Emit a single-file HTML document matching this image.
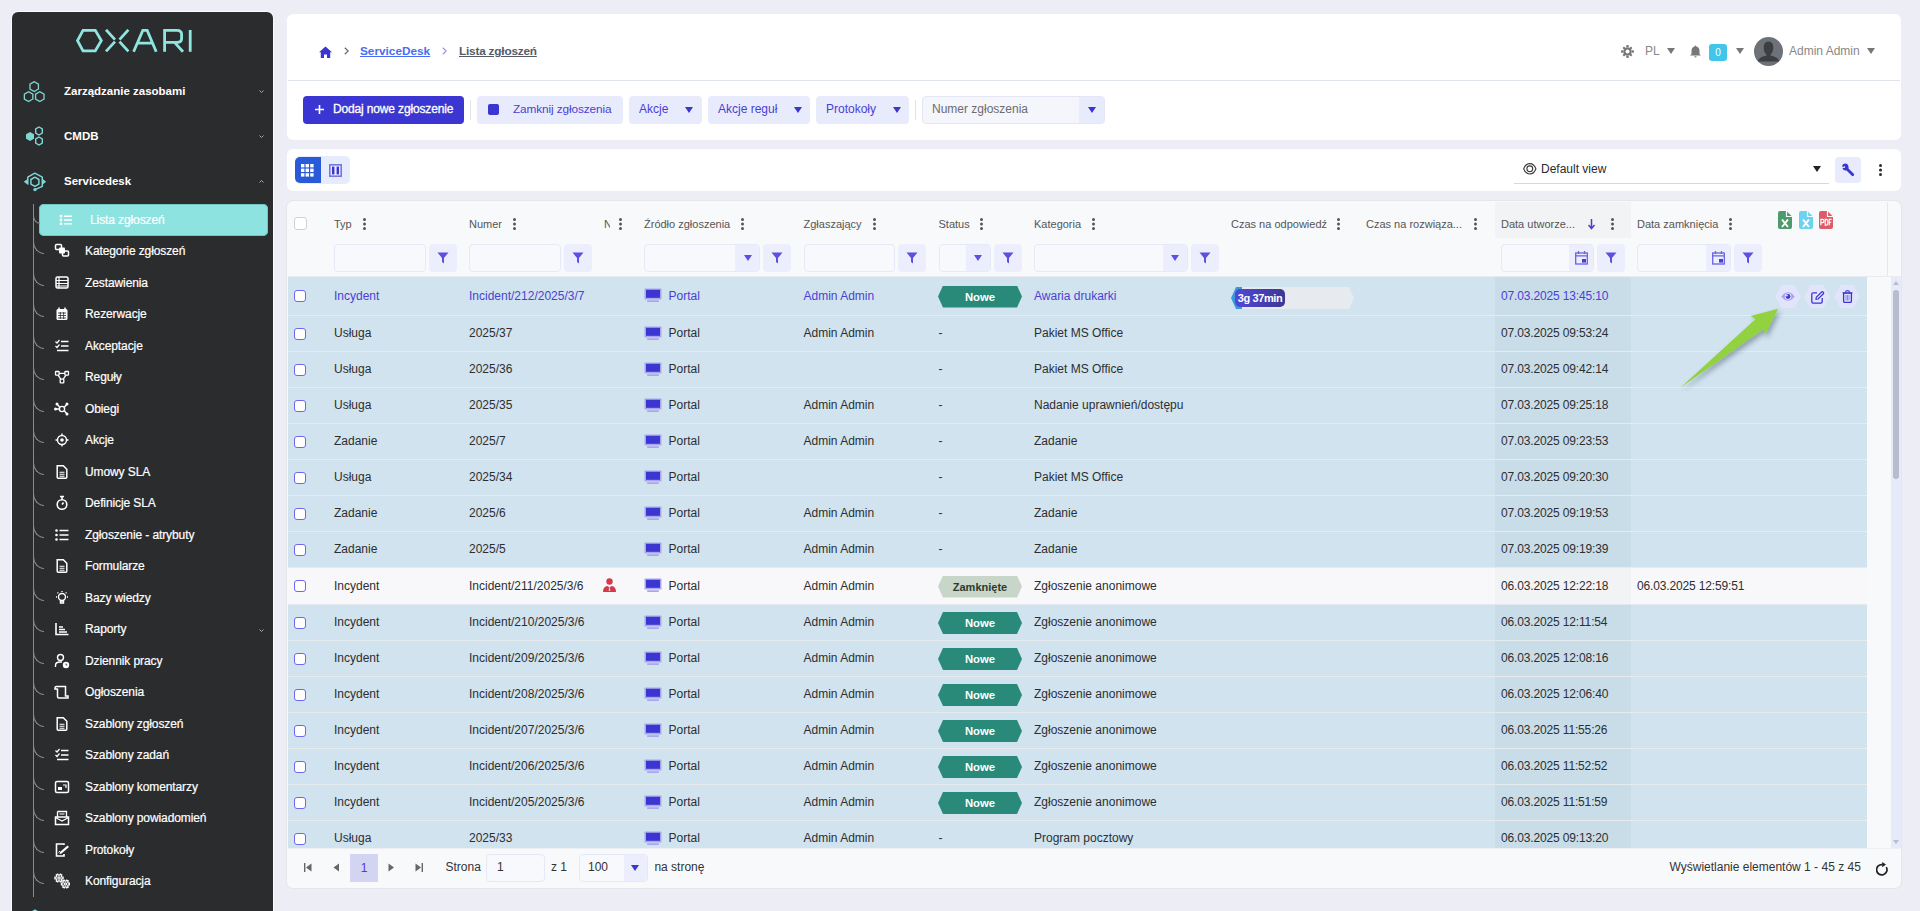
<!DOCTYPE html><html><head><meta charset="utf-8"><style>
*{box-sizing:border-box;margin:0;padding:0}
html,body{width:1920px;height:911px;overflow:hidden}
body{background:#ededf5;font-family:"Liberation Sans",sans-serif;position:relative;color:#2f2f33}
.abs{position:absolute}
svg{display:block}
#side{position:absolute;left:12px;top:12px;width:261px;height:920px;background:#2b2c2e;border-radius:6px;box-shadow:0 0 0 1px #fafafa}
.top{position:absolute;left:52px;color:#fff;font-weight:bold;font-size:11.5px;white-space:nowrap;line-height:14px}
.chev{position:absolute;left:246.5px;width:5px;height:3px}
.sub{position:absolute;left:73px;color:#fff;font-size:12px;white-space:nowrap;line-height:14px;letter-spacing:-0.1px;-webkit-text-stroke:0.2px #fff}
.sico{position:absolute;width:16px;height:16px}
#hdr{position:absolute;left:287px;top:14px;width:1614px;height:126px;background:#fff;border-radius:6px}
#tb2{position:absolute;left:287px;top:149px;width:1614px;height:42px;background:#fff;border-radius:6px}
#tbl{position:absolute;left:287px;top:201px;width:1614px;height:687px;background:#f8f9fb;border-radius:6px;box-shadow:0 0 0 1px #e4e6ec;overflow:hidden}
.t{position:absolute;white-space:nowrap;font-size:12px;line-height:14px}
.btn{position:absolute;top:82px;height:28px;background:#e8ebfc;border-radius:4px;color:#4338d0;font-size:12px;line-height:28px;white-space:nowrap}
.arr{position:absolute;width:0;height:0;border-left:4px solid transparent;border-right:4px solid transparent;border-top:6px solid #3b35d1}
.hd{position:absolute;top:18px;font-size:11px;color:#555;white-space:nowrap;line-height:14px}
.dots{position:absolute;top:17px;width:3px;height:12px}
.inp{position:absolute;top:43px;height:28px;border:1px solid #e6e8f7;border-radius:4px;background:#f8f9fc}
.fbtn{position:absolute;top:43px;width:28px;height:28px;background:#eceefd;border-radius:4px}
.row{position:absolute;left:1px;width:1579px;background:#d0e3ee;border-bottom:1px solid #eaeeee}
.cell{position:absolute;white-space:nowrap;font-size:12px;line-height:14px;color:#2e2e30}
.cb{position:absolute;left:7px;width:12px;height:12px;border:1.5px solid #6b63ea;border-radius:3px;background:#fff}
</style></head><body>
<div id="side">
<div class="abs" style="left:64px;top:17px"><svg width="118" height="24" viewBox="0 0 118 24" style=""><g fill="none" stroke="#8fe6e1" stroke-width="2.8" stroke-linejoin="miter">
<path d="M7,1.4 L19.3,1.4 L25.3,11.6 L19.3,21.8 L7,21.8 L1.5,11.6 Z"/>
<path d="M30,0.8 L39,10.6 M39,12.6 L30,22.4"/>
<path d="M52.4,0.8 L43.5,10.6 M43.5,12.6 L52.4,22.4"/>
<path d="M57.6,22.8 L66.8,1.4 L71.2,1.4 L80.2,22.8 M61.2,14.2 L76.5,14.2"/>
<path d="M88.6,22.8 L88.6,1.4 L101,1.4 Q105.6,1.4 105.6,5.5 L105.6,9.5 Q105.6,13.4 101,13.4 L88.6,13.4 M98.5,13.4 L107,22.8"/>
<path d="M114.2,1 L114.2,22.8"/>
</g></svg></div>
<div class="abs" style="left:11px;top:69px"><svg width="23" height="22" viewBox="0 0 23 22" style=""><g fill="none" stroke="#7fd6d2" stroke-width="1.3"><path d="M15.44,8.05 L11.20,10.50 L6.96,8.05 L6.96,3.15 L11.20,0.70 L15.44,3.15 Z"/><path d="M9.84,18.05 L5.60,20.50 L1.36,18.05 L1.36,13.15 L5.60,10.70 L9.84,13.15 Z"/><path d="M21.04,18.05 L16.80,20.50 L12.56,18.05 L12.56,13.15 L16.80,10.70 L21.04,13.15 Z"/></g></svg></div>
<div class="top" style="top:72px">Zarządzanie zasobami</div>
<div class="abs" style="left:13px;top:114px"><svg width="20" height="21" viewBox="0 0 20 21" style=""><g fill="none" stroke="#7fd6d2" stroke-width="1.4"><path d="M14,1 L17.3,3 L17.3,7 L14,9 L10.7,7 L10.7,3 Z"/><path d="M14,11 L17.3,13 L17.3,17 L14,19 L10.7,17 L10.7,13 Z"/></g><path d="M5,6 L9,8.3 L9,12.7 L5,15 L1,12.7 L1,8.3 Z" fill="#7fd6d2"/></svg></div>
<div class="top" style="top:117px">CMDB</div>
<div class="abs" style="left:10px;top:159px"><svg width="26" height="21" viewBox="0 0 26 21" style=""><g fill="none" stroke="#7fd6d2" stroke-width="1.5" stroke-linejoin="round"><path d="M5.8,13.6 L5.8,6.1 L12.8,2.2 L20.3,6.1 L20.3,15.4 L13,18.6"/><path d="M12.90,6.20 L16.88,8.50 L16.88,13.10 L12.90,15.40 L8.92,13.10 L8.92,8.50 Z"/></g><path d="M1.8,10.8 L5.8,7.8 L5.8,13.8 Z M24.2,10.8 L20.3,7.8 L20.3,13.8 Z" fill="#7fd6d2"/><circle cx="13" cy="18.6" r="1.7" fill="#7fd6d2"/></svg></div>
<div class="top" style="top:162px">Servicedesk</div>
<div class="chev" style="top:78px"><svg width="5" height="3" viewBox="0 0 5 3" style=""><path d="M0.5,0.5 L2.5,2.5 L4.5,0.5" fill="none" stroke="#aaa" stroke-width="1"/></svg></div>
<div class="chev" style="top:123px"><svg width="5" height="3" viewBox="0 0 5 3" style=""><path d="M0.5,0.5 L2.5,2.5 L4.5,0.5" fill="none" stroke="#aaa" stroke-width="1"/></svg></div>
<div class="chev" style="top:168px"><svg width="5" height="3" viewBox="0 0 5 3" style=""><path d="M0.5,2.5 L2.5,0.5 L4.5,2.5" fill="none" stroke="#aaa" stroke-width="1"/></svg></div>
<div class="abs" style="left:21px;top:192px;width:1px;height:693px;background:#8a8a8c"></div>
<div class="abs" style="left:27px;top:192px;width:229px;height:32px;background:#8ce3df;border-radius:5px;box-shadow:inset 0 0 0 1px #72c6c2"></div>
<div class="abs" style="left:21px;top:198px;width:7px;height:14px;border-left:1px solid #8a8a8c;border-bottom:1px solid #8a8a8c;border-bottom-left-radius:10px 12px"></div>
<div class="abs" style="left:47px;top:202px"><svg width="14" height="12" viewBox="0 0 14 12" style=""><g fill="#ffffff"><circle cx="2" cy="2.2" r="1.4"/><circle cx="2" cy="6" r="1.4"/><circle cx="2" cy="9.8" r="1.4"/></g><path d="M5,2.2 H13 M5,6 H13 M5,9.8 H13" stroke="#ffffff" stroke-width="1.6"/></svg></div>
<div class="sub" style="left:78px;top:201px;color:#fff">Lista zgłoszeń</div>
<div class="abs" style="left:21px;top:221.0px;width:11px;height:21px;border-left:1px solid #8a8a8c;border-bottom:1px solid #8a8a8c;border-bottom-left-radius:14px 16px"></div>
<div class="sico" style="left:42px;top:231.0px"><svg width="16" height="16" viewBox="0 0 16 16" style=""><rect x="1.5" y="1.5" width="6" height="5" rx="1" fill="none" stroke="#ffffff" stroke-width="1.5"/><rect x="5" y="4.5" width="6" height="6" rx="1" fill="#ffffff"/><rect x="8.5" y="8" width="6" height="5" rx="1" fill="none" stroke="#ffffff" stroke-width="1.5"/></svg></div>
<div class="sub" style="top:232.0px">Kategorie zgłoszeń</div>
<div class="abs" style="left:21px;top:252.5px;width:11px;height:21px;border-left:1px solid #8a8a8c;border-bottom:1px solid #8a8a8c;border-bottom-left-radius:14px 16px"></div>
<div class="sico" style="left:42px;top:262.5px"><svg width="16" height="16" viewBox="0 0 16 16" style=""><rect x="2" y="2" width="12" height="11" rx="1.5" fill="none" stroke="#ffffff" stroke-width="1.5"/><path d="M2,5.5 H14 M2,8.5 H14 M2,11 H14 M5,2 V13" stroke="#ffffff" stroke-width="1.2"/></svg></div>
<div class="sub" style="top:263.5px">Zestawienia</div>
<div class="abs" style="left:21px;top:284.0px;width:11px;height:21px;border-left:1px solid #8a8a8c;border-bottom:1px solid #8a8a8c;border-bottom-left-radius:14px 16px"></div>
<div class="sico" style="left:42px;top:294.0px"><svg width="16" height="16" viewBox="0 0 16 16" style=""><rect x="2.5" y="3" width="11" height="11" rx="1.5" fill="#ffffff"/><path d="M5,1.5 V4 M11,1.5 V4" stroke="#ffffff" stroke-width="1.5"/><path d="M4,7 H12 M4,9.5 H12 M4,12 H12 M6.3,6 V13 M9.6,6 V13" stroke="#2b2c2e" stroke-width="0.8"/></svg></div>
<div class="sub" style="top:295.0px">Rezerwacje</div>
<div class="abs" style="left:21px;top:315.5px;width:11px;height:21px;border-left:1px solid #8a8a8c;border-bottom:1px solid #8a8a8c;border-bottom-left-radius:14px 16px"></div>
<div class="sico" style="left:42px;top:325.5px"><svg width="16" height="16" viewBox="0 0 16 16" style=""><path d="M1.5,3.5 L3,5 L5.5,2 M1.5,8 L3,9.5 L5.5,6.5" fill="none" stroke="#ffffff" stroke-width="1.2"/><path d="M7,3.5 H14.5 M7,8 H14.5 M3,12.5 H14.5" stroke="#ffffff" stroke-width="1.5"/></svg></div>
<div class="sub" style="top:326.5px">Akceptacje</div>
<div class="abs" style="left:21px;top:347.0px;width:11px;height:21px;border-left:1px solid #8a8a8c;border-bottom:1px solid #8a8a8c;border-bottom-left-radius:14px 16px"></div>
<div class="sico" style="left:42px;top:357.0px"><svg width="16" height="16" viewBox="0 0 16 16" style=""><g fill="none" stroke="#ffffff" stroke-width="1.3"><rect x="1.5" y="2.5" width="3.6" height="3.6" rx="0.6"/><rect x="10.9" y="2.5" width="3.6" height="3.6" rx="0.6"/><rect x="6.2" y="10.2" width="3.6" height="3.6" rx="0.6"/><path d="M5.1,4.3 H10.9 M4,6.1 L6.8,10.2 M12,6.1 L9.2,10.2"/></g></svg></div>
<div class="sub" style="top:358.0px">Reguły</div>
<div class="abs" style="left:21px;top:378.5px;width:11px;height:21px;border-left:1px solid #8a8a8c;border-bottom:1px solid #8a8a8c;border-bottom-left-radius:14px 16px"></div>
<div class="sico" style="left:42px;top:388.5px"><svg width="16" height="16" viewBox="0 0 16 16" style=""><g fill="none" stroke="#ffffff" stroke-width="1.4"><circle cx="8" cy="8" r="2.6"/><path d="M5.5,6 L3,3 M10.5,6 L13,3 M10.5,10 L13,13 M5.5,8 H1.5"/></g><circle cx="3" cy="3" r="1.5" fill="#ffffff"/><circle cx="13" cy="3" r="1.5" fill="#ffffff"/><circle cx="13" cy="13" r="1.5" fill="#ffffff"/><circle cx="1.5" cy="8" r="1.5" fill="#ffffff"/></svg></div>
<div class="sub" style="top:389.5px">Obiegi</div>
<div class="abs" style="left:21px;top:410.0px;width:11px;height:21px;border-left:1px solid #8a8a8c;border-bottom:1px solid #8a8a8c;border-bottom-left-radius:14px 16px"></div>
<div class="sico" style="left:42px;top:420.0px"><svg width="16" height="16" viewBox="0 0 16 16" style=""><g fill="none" stroke="#ffffff" stroke-width="1.4"><circle cx="8" cy="8" r="4.5"/><path d="M8,1.5 V3.5 M8,12.5 V14.5 M1.5,8 H3.5 M12.5,8 H14.5"/></g><circle cx="8" cy="8" r="1.8" fill="#ffffff"/></svg></div>
<div class="sub" style="top:421.0px">Akcje</div>
<div class="abs" style="left:21px;top:441.5px;width:11px;height:21px;border-left:1px solid #8a8a8c;border-bottom:1px solid #8a8a8c;border-bottom-left-radius:14px 16px"></div>
<div class="sico" style="left:42px;top:451.5px"><svg width="16" height="16" viewBox="0 0 16 16" style=""><path d="M3.2,1.7 H9.3 L12.8,5.2 V13.3 Q12.8,14.3 11.8,14.3 H4.2 Q3.2,14.3 3.2,13.3 Z" fill="none" stroke="#ffffff" stroke-width="1.5"/><path d="M5.5,8.3 H10.5 M5.5,10.3 H10.5 M5.5,12.2 H10.5" stroke="#ffffff" stroke-width="1.1"/></svg></div>
<div class="sub" style="top:452.5px">Umowy SLA</div>
<div class="abs" style="left:21px;top:473.0px;width:11px;height:21px;border-left:1px solid #8a8a8c;border-bottom:1px solid #8a8a8c;border-bottom-left-radius:14px 16px"></div>
<div class="sico" style="left:42px;top:483.0px"><svg width="16" height="16" viewBox="0 0 16 16" style=""><g fill="none" stroke="#ffffff" stroke-width="1.6"><circle cx="8" cy="9.5" r="4.8"/><path d="M6,1.5 H10 M8,2 V4.5 M8,9.5 L9.5,7.5"/></g></svg></div>
<div class="sub" style="top:484.0px">Definicje SLA</div>
<div class="abs" style="left:21px;top:504.5px;width:11px;height:21px;border-left:1px solid #8a8a8c;border-bottom:1px solid #8a8a8c;border-bottom-left-radius:14px 16px"></div>
<div class="sico" style="left:42px;top:514.5px"><svg width="16" height="16" viewBox="0 0 16 16" style=""><g fill="#ffffff"><circle cx="2.5" cy="3.5" r="1.3"/><circle cx="2.5" cy="8" r="1.3"/><circle cx="2.5" cy="12.5" r="1.3"/></g><path d="M5.5,3.5 H14.5 M5.5,8 H14.5 M5.5,12.5 H14.5" stroke="#ffffff" stroke-width="1.6"/></svg></div>
<div class="sub" style="top:515.5px">Zgłoszenie - atrybuty</div>
<div class="abs" style="left:21px;top:536.0px;width:11px;height:21px;border-left:1px solid #8a8a8c;border-bottom:1px solid #8a8a8c;border-bottom-left-radius:14px 16px"></div>
<div class="sico" style="left:42px;top:546.0px"><svg width="16" height="16" viewBox="0 0 16 16" style=""><path d="M3.2,1.7 H9.3 L12.8,5.2 V13.3 Q12.8,14.3 11.8,14.3 H4.2 Q3.2,14.3 3.2,13.3 Z" fill="none" stroke="#ffffff" stroke-width="1.5"/><path d="M5.5,8.3 H10.5 M5.5,10.3 H10.5 M5.5,12.2 H10.5" stroke="#ffffff" stroke-width="1.1"/></svg></div>
<div class="sub" style="top:547.0px">Formularze</div>
<div class="abs" style="left:21px;top:567.5px;width:11px;height:21px;border-left:1px solid #8a8a8c;border-bottom:1px solid #8a8a8c;border-bottom-left-radius:14px 16px"></div>
<div class="sico" style="left:42px;top:577.5px"><svg width="16" height="16" viewBox="0 0 16 16" style=""><g fill="none" stroke="#ffffff" stroke-width="1.4"><circle cx="8" cy="7" r="3.5"/><path d="M6.5,11 H9.5 V13 H6.5 Z M8,1 V2 M2,7 H3 M13,7 H14 M3.5,2.5 L4.3,3.3 M12.5,2.5 L11.7,3.3"/></g></svg></div>
<div class="sub" style="top:578.5px">Bazy wiedzy</div>
<div class="abs" style="left:21px;top:599.0px;width:11px;height:21px;border-left:1px solid #8a8a8c;border-bottom:1px solid #8a8a8c;border-bottom-left-radius:14px 16px"></div>
<div class="sico" style="left:42px;top:609.0px"><svg width="16" height="16" viewBox="0 0 16 16" style=""><path d="M2,2 V13.5 H14.5" fill="none" stroke="#ffffff" stroke-width="1.6"/><path d="M5,6 H9 M5,8.5 H11 M5,11 H13" stroke="#ffffff" stroke-width="1.4"/></svg></div>
<div class="sub" style="top:610.0px">Raporty</div>
<div class="chev" style="top:616.5px"><svg width="5" height="3" viewBox="0 0 5 3" style=""><path d="M0.5,0.5 L2.5,2.5 L4.5,0.5" fill="none" stroke="#aaa" stroke-width="1"/></svg></div>
<div class="abs" style="left:21px;top:630.5px;width:11px;height:21px;border-left:1px solid #8a8a8c;border-bottom:1px solid #8a8a8c;border-bottom-left-radius:14px 16px"></div>
<div class="sico" style="left:42px;top:640.5px"><svg width="16" height="16" viewBox="0 0 16 16" style=""><g fill="none" stroke="#ffffff" stroke-width="1.4"><circle cx="6.5" cy="4.5" r="3"/><path d="M1.5,14 V12.5 Q1.5,9 6,9 L8,9"/></g><circle cx="12" cy="12" r="3.2" fill="#ffffff"/><path d="M12,10.5 V12 H13.3" stroke="#2b2c2e" stroke-width="0.8" fill="none"/></svg></div>
<div class="sub" style="top:641.5px">Dziennik pracy</div>
<div class="abs" style="left:21px;top:662.0px;width:11px;height:21px;border-left:1px solid #8a8a8c;border-bottom:1px solid #8a8a8c;border-bottom-left-radius:14px 16px"></div>
<div class="sico" style="left:42px;top:672.0px"><svg width="16" height="16" viewBox="0 0 16 16" style=""><path d="M2.5,2.5 H11.5 V12 H14 V14 H5 Q3.5,14 3.5,12.5 V4.5 M2.5,2.5 Q1,2.5 1,4 V5 H3.5" fill="none" stroke="#ffffff" stroke-width="1.5"/></svg></div>
<div class="sub" style="top:673.0px">Ogłoszenia</div>
<div class="abs" style="left:21px;top:693.5px;width:11px;height:21px;border-left:1px solid #8a8a8c;border-bottom:1px solid #8a8a8c;border-bottom-left-radius:14px 16px"></div>
<div class="sico" style="left:42px;top:703.5px"><svg width="16" height="16" viewBox="0 0 16 16" style=""><path d="M3.2,1.7 H9.3 L12.8,5.2 V13.3 Q12.8,14.3 11.8,14.3 H4.2 Q3.2,14.3 3.2,13.3 Z" fill="none" stroke="#ffffff" stroke-width="1.5"/><path d="M5.5,8.3 H10.5 M5.5,10.3 H10.5 M5.5,12.2 H10.5" stroke="#ffffff" stroke-width="1.1"/></svg></div>
<div class="sub" style="top:704.5px">Szablony zgłoszeń</div>
<div class="abs" style="left:21px;top:725.0px;width:11px;height:21px;border-left:1px solid #8a8a8c;border-bottom:1px solid #8a8a8c;border-bottom-left-radius:14px 16px"></div>
<div class="sico" style="left:42px;top:735.0px"><svg width="16" height="16" viewBox="0 0 16 16" style=""><path d="M1.5,3.5 L3,5 L5.5,2 M1.5,8 L3,9.5 L5.5,6.5" fill="none" stroke="#ffffff" stroke-width="1.2"/><path d="M7,3.5 H14.5 M7,8 H14.5 M3,12.5 H14.5" stroke="#ffffff" stroke-width="1.5"/></svg></div>
<div class="sub" style="top:736.0px">Szablony zadań</div>
<div class="abs" style="left:21px;top:756.5px;width:11px;height:21px;border-left:1px solid #8a8a8c;border-bottom:1px solid #8a8a8c;border-bottom-left-radius:14px 16px"></div>
<div class="sico" style="left:42px;top:766.5px"><svg width="16" height="16" viewBox="0 0 16 16" style=""><rect x="1.5" y="2.5" width="13" height="11" rx="1.5" fill="none" stroke="#ffffff" stroke-width="1.5"/><rect x="4" y="8" width="4" height="3" fill="#ffffff"/><path d="M9,6 L12,6 L12,9" fill="none" stroke="#ffffff" stroke-width="1.2"/></svg></div>
<div class="sub" style="top:767.5px">Szablony komentarzy</div>
<div class="abs" style="left:21px;top:788.0px;width:11px;height:21px;border-left:1px solid #8a8a8c;border-bottom:1px solid #8a8a8c;border-bottom-left-radius:14px 16px"></div>
<div class="sico" style="left:42px;top:798.0px"><svg width="16" height="16" viewBox="0 0 16 16" style=""><path d="M3.5,1.5 H12.5 V7 M3.5,1.5 V7" fill="none" stroke="#ffffff" stroke-width="1.3"/><path d="M1.5,7 H14.5 V14.5 H1.5 Z" fill="none" stroke="#ffffff" stroke-width="1.5"/><path d="M1.5,7.5 L8,11 L14.5,7.5 M5.5,4 H10.5" fill="none" stroke="#ffffff" stroke-width="1.2"/></svg></div>
<div class="sub" style="top:799.0px">Szablony powiadomień</div>
<div class="abs" style="left:21px;top:819.5px;width:11px;height:21px;border-left:1px solid #8a8a8c;border-bottom:1px solid #8a8a8c;border-bottom-left-radius:14px 16px"></div>
<div class="sico" style="left:42px;top:829.5px"><svg width="16" height="16" viewBox="0 0 16 16" style=""><path d="M10,3 V2 H2.5 V14 H10 V12" fill="none" stroke="#ffffff" stroke-width="1.6"/><path d="M6,10 L13.5,3.5 L15,5 L7.5,11.5 L5.5,12 Z" fill="#ffffff"/><path d="M4.5,10.5 L6,9" stroke="#ffffff"/></svg></div>
<div class="sub" style="top:830.5px">Protokoły</div>
<div class="abs" style="left:21px;top:851.0px;width:11px;height:21px;border-left:1px solid #8a8a8c;border-bottom:1px solid #8a8a8c;border-bottom-left-radius:14px 16px"></div>
<div class="sico" style="left:42px;top:861.0px"><svg width="16" height="16" viewBox="0 0 16 16" style=""><g fill="none" stroke="#ffffff" stroke-width="1.2"><path d="M9.10,4.08 L9.10,5.92 L7.77,5.87 L7.13,6.96 L7.84,8.09 L6.26,9.01 L5.63,7.83 L4.37,7.83 L3.74,9.01 L2.16,8.09 L2.87,6.96 L2.23,5.87 L0.90,5.92 L0.90,4.08 L2.23,4.13 L2.87,3.04 L2.16,1.91 L3.74,0.99 L4.37,2.17 L5.63,2.17 L6.26,0.99 L7.84,1.91 L7.13,3.04 L7.77,4.13 Z"/><path d="M15.60,10.08 L15.60,11.92 L14.27,11.87 L13.63,12.96 L14.34,14.09 L12.76,15.01 L12.13,13.83 L10.87,13.83 L10.24,15.01 L8.66,14.09 L9.37,12.96 L8.73,11.87 L7.40,11.92 L7.40,10.08 L8.73,10.13 L9.37,9.04 L8.66,7.91 L10.24,6.99 L10.87,8.17 L12.13,8.17 L12.76,6.99 L14.34,7.91 L13.63,9.04 L14.27,10.13 Z"/><circle cx="5" cy="5" r="1.2"/><circle cx="11.5" cy="11" r="1.2"/></g></svg></div>
<div class="sub" style="top:862.0px">Konfiguracja</div>
<div class="abs" style="left:19px;top:896.5px"><svg width="8" height="6" viewBox="0 0 8 6" style=""><path d='M4,0.3 L7.5,2.3 L7.5,6 L0.5,6 L0.5,2.3 Z' fill='#7fd6d2'/></svg></div>
</div>
<div id="hdr"></div>
<div class="abs" style="left:288px;top:80px;width:1612px;height:1px;background:#dfe4ea"></div>
<div class="abs" style="left:319px;top:46px"><svg width="13" height="12" viewBox="0 0 13 12" style=""><path d="M6.5,0.5 L13,6.3 L11.2,6.3 L11.2,12 L8,12 L8,8.5 L5,8.5 L5,12 L1.8,12 L1.8,6.3 L0,6.3 Z" fill="#3b35d1"/></svg></div>
<div class="abs" style="left:344px;top:47px"><svg width="5" height="8" viewBox="0 0 5 8" style=""><path d="M0.8,0.8 L4.2,4 L0.8,7.2" fill="none" stroke="#666" stroke-width="1.2"/></svg></div>
<div class="t" style="left:360px;top:44px;color:#4a6cf2;font-weight:bold;font-size:11.8px;text-decoration:underline;text-underline-offset:1px">ServiceDesk</div>
<div class="abs" style="left:442px;top:47px"><svg width="5" height="8" viewBox="0 0 5 8" style=""><path d="M0.8,0.8 L4.2,4 L0.8,7.2" fill="none" stroke="#9b95e6" stroke-width="1.2"/></svg></div>
<div class="t" style="left:459px;top:44px;color:#555b66;font-weight:bold;font-size:11.8px;text-decoration:underline;text-underline-offset:1px;letter-spacing:-0.2px">Lista zgłoszeń</div>
<div class="abs" style="left:1621px;top:45px"><svg width="13" height="13" viewBox="0 0 13 13" style=""><g fill="#777"><circle cx="6.5" cy="6.5" r="4.3"/><path d="M5.5,0 H7.5 L7.8,2 H5.2 Z M5.5,13 H7.5 L7.8,11 H5.2 Z M0,5.5 V7.5 L2,7.8 V5.2 Z M13,5.5 V7.5 L11,7.8 V5.2 Z" /><path d="M1.6,3 L3,1.6 L4.5,3 L3,4.5Z M11.4,3 L10,1.6 L8.5,3 L10,4.5Z M1.6,10 L3,11.4 L4.5,10 L3,8.5Z M11.4,10 L10,11.4 L8.5,10 L10,8.5Z"/></g><circle cx="6.5" cy="6.5" r="2" fill="#fff"/></svg></div>
<div class="t" style="left:1645px;top:44px;color:#888;font-size:12px">PL</div>
<div class="arr" style="left:1667px;top:48px;border-top-color:#777"></div>
<div class="abs" style="left:1690px;top:45px"><svg width="11" height="13" viewBox="0 0 11 13" style=""><path d="M5.5,0.5 Q6.2,0.5 6.3,1.5 Q9.5,2.3 9.5,6 L9.5,9 L11,10.5 H0 L1.5,9 L1.5,6 Q1.5,2.3 4.7,1.5 Q4.8,0.5 5.5,0.5 Z" fill="#777"/><path d="M4.3,11.3 H6.7 Q6.5,12.5 5.5,12.5 Q4.5,12.5 4.3,11.3Z" fill="#777"/></svg></div>
<div class="abs" style="left:1709px;top:44px;width:18px;height:17px;background:#3fc6ea;border-radius:3px;color:#fff;font-size:10px;text-align:center;line-height:17px">0</div>
<div class="arr" style="left:1736px;top:48px;border-top-color:#777"></div>
<div class="abs" style="left:1754px;top:37px"><svg width="29" height="29" viewBox="0 0 29 29" style=""><defs><clipPath id="avc"><circle cx="14.5" cy="14.5" r="14.5"/></clipPath></defs><circle cx="14.5" cy="14.5" r="14.5" fill="#6d7278"/><g clip-path="url(#avc)" fill="#3c3e42"><path d="M14.5,4.5 Q19.3,4.5 19.3,10.5 Q19.3,15.5 16.5,17.5 L16.5,18.5 Q24.5,20 25,24.5 L4,24.5 Q4.5,20 12.5,18.5 L12.5,17.5 Q9.7,15.5 9.7,10.5 Q9.7,4.5 14.5,4.5 Z"/></g></svg></div>
<div class="t" style="left:1789px;top:44px;color:#888;font-size:12px">Admin Admin</div>
<div class="arr" style="left:1867px;top:48px;border-top-color:#777"></div>
<div class="abs" style="left:303px;top:96px;width:161px;height:28px;background:#3b35d1;border-radius:4px"></div>
<div class="abs" style="left:315px;top:105px"><svg width="9" height="9" viewBox="0 0 9 9" style=""><path d="M4.5,0 V9 M0,4.5 H9" stroke="#fff" stroke-width="1.6"/></svg></div>
<div class="t" style="left:333px;top:102px;color:#fff;font-size:12px;letter-spacing:-0.15px;-webkit-text-stroke:0.3px #fff">Dodaj nowe zgłoszenie</div>
<div class="abs" style="left:470px;top:100px;width:1px;height:20px;background:#e3e4ea"></div>
<div class="abs" style="left:477px;top:96px;width:146px;height:28px;background:#e8ebfc;border-radius:4px"></div>
<div class="abs" style="left:488px;top:104px;width:11px;height:11px;background:#3b35d1;border-radius:2px"></div>
<div class="t" style="left:513px;top:102px;color:#4a3fd3;font-size:11.8px;letter-spacing:-0.1px">Zamknij zgłoszenia</div>
<div class="abs" style="left:629px;top:96px;width:73px;height:28px;background:#e8ebfc;border-radius:4px"></div>
<div class="t" style="left:639px;top:102px;color:#4a3fd3;font-size:12px">Akcje</div>
<div class="arr" style="left:685px;top:107px"></div>
<div class="abs" style="left:708px;top:96px;width:102px;height:28px;background:#e8ebfc;border-radius:4px"></div>
<div class="t" style="left:718px;top:102px;color:#4a3fd3;font-size:12px">Akcje reguł</div>
<div class="arr" style="left:794px;top:107px"></div>
<div class="abs" style="left:816px;top:96px;width:93px;height:28px;background:#e8ebfc;border-radius:4px"></div>
<div class="t" style="left:826px;top:102px;color:#4a3fd3;font-size:12px">Protokoły</div>
<div class="arr" style="left:893px;top:107px"></div>
<div class="abs" style="left:915px;top:100px;width:1px;height:20px;background:#e3e4ea"></div>
<div class="abs" style="left:922px;top:96px;width:183px;height:28px;background:#f5f6fb;border:1px solid #e4e6f6;border-radius:4px;overflow:hidden"><div class="abs" style="left:156px;top:0;width:27px;height:28px;background:#e8ebfc"></div></div>
<div class="t" style="left:932px;top:102px;color:#6b6b70;font-size:12px">Numer zgłoszenia</div>
<div class="arr" style="left:1088px;top:107px"></div>
<div id="tb2"></div>
<div class="abs" style="left:295px;top:156px;width:55px;height:28px;background:#e6ebfd;border-radius:5px"></div>
<div class="abs" style="left:295px;top:157px;width:26px;height:26px;background:#2b5ad8;border-radius:5px 0 0 5px"></div>
<div class="abs" style="left:301px;top:164px"><svg width="13" height="13" viewBox="0 0 13 13" style=""><rect x="0" y="0" width="3.4" height="3.4" fill="#fff"/><rect x="0" y="4.6" width="3.4" height="3.4" fill="#fff"/><rect x="0" y="9.2" width="3.4" height="3.4" fill="#fff"/><rect x="4.6" y="0" width="3.4" height="3.4" fill="#fff"/><rect x="4.6" y="4.6" width="3.4" height="3.4" fill="#fff"/><rect x="4.6" y="9.2" width="3.4" height="3.4" fill="#fff"/><rect x="9.2" y="0" width="3.4" height="3.4" fill="#fff"/><rect x="9.2" y="4.6" width="3.4" height="3.4" fill="#fff"/><rect x="9.2" y="9.2" width="3.4" height="3.4" fill="#fff"/></svg></div>
<div class="abs" style="left:329px;top:164px"><svg width="13" height="13" viewBox="0 0 13 13" style=""><rect x="0.8" y="0.8" width="11.4" height="11.4" fill="none" stroke="#7b74e4" stroke-width="1.6"/><rect x="3" y="2.6" width="2.4" height="7.8" fill="#3b35d1"/><rect x="7.6" y="2.6" width="2.4" height="7.8" fill="#3b35d1"/></svg></div>
<div class="abs" style="left:1523px;top:163px"><svg width="14" height="12" viewBox="0 0 14 12" style=""><g fill="none" stroke="#3a3a3e" stroke-width="1.1"><path d="M0.7,5.8 Q2.5,0.6 6.8,0.6 Q11.1,0.6 12.9,5.8 Q11.1,11 6.8,11 Q2.5,11 0.7,5.8 Z"/><circle cx="6.8" cy="5.8" r="2.9"/></g></svg></div>
<div class="t" style="left:1541px;top:162px;color:#2a2a2e;font-size:12px">Default view</div>
<div class="arr" style="left:1813px;top:166px;border-top-color:#222"></div>
<div class="abs" style="left:1514px;top:183px;width:315px;height:1px;background:#d5d8e0"></div>
<div class="abs" style="left:1835px;top:157px;width:26px;height:26px;background:#e8ebfc;border-radius:4px"></div>
<div class="abs" style="left:1841px;top:163px;transform:scaleX(-1)"><svg width="14" height="14" viewBox="0 0 14 14" style=""><path d="M9.5,0.5 Q12.5,0.5 13,3.5 L11,3.8 L10.2,3 L9.8,4.2 L10.5,5 L12.5,4.8 Q12,8 8.5,7.5 L3.2,12.8 Q2.2,13.6 1.2,12.6 Q0.3,11.6 1.2,10.8 L6.5,5.5 Q6,1 9.5,0.5 Z" fill="#3b35d1"/></svg></div>
<div class="abs" style="left:1879px;top:164px"><svg width="3" height="12" viewBox="0 0 3 12" style=""><circle cx="1.5" cy="1.5" r="1.5" fill="#2a2a2e"/><circle cx="1.5" cy="6" r="1.5" fill="#2a2a2e"/><circle cx="1.5" cy="10.5" r="1.5" fill="#2a2a2e"/></svg></div>
<div id="tbl"></div>
<div class="abs" style="left:1495px;top:202px;width:136px;height:36px;background:#f2f3f5"></div>
<div class="abs" style="left:1887px;top:202px;width:1px;height:75px;background:#e6e8ec"></div>
<div class="abs" style="left:288px;top:276px;width:1612px;height:1px;background:#e9ebef"></div>
<div class="abs" style="left:294px;top:217px;width:13px;height:13px;border:1px solid #cfd1d8;border-radius:3px;background:#fff"></div>
<div class="t" style="left:334px;top:216.5px;font-size:11px;color:#555">Typ</div>
<div class="abs" style="left:362.5px;top:218px"><svg width="3" height="12" viewBox="0 0 3 12" style=""><circle cx="1.5" cy="1.5" r="1.5" fill="#555"/><circle cx="1.5" cy="6" r="1.5" fill="#555"/><circle cx="1.5" cy="10.5" r="1.5" fill="#555"/></svg></div>
<div class="t" style="left:469px;top:216.5px;font-size:11px;color:#555">Numer</div>
<div class="abs" style="left:512.5px;top:218px"><svg width="3" height="12" viewBox="0 0 3 12" style=""><circle cx="1.5" cy="1.5" r="1.5" fill="#555"/><circle cx="1.5" cy="6" r="1.5" fill="#555"/><circle cx="1.5" cy="10.5" r="1.5" fill="#555"/></svg></div>
<div class="t" style="left:604px;top:216.5px;font-size:11px;color:#555;width:6px;overflow:hidden">N</div>
<div class="abs" style="left:618.5px;top:218px"><svg width="3" height="12" viewBox="0 0 3 12" style=""><circle cx="1.5" cy="1.5" r="1.5" fill="#555"/><circle cx="1.5" cy="6" r="1.5" fill="#555"/><circle cx="1.5" cy="10.5" r="1.5" fill="#555"/></svg></div>
<div class="t" style="left:644px;top:216.5px;font-size:11px;color:#555">Źródło zgłoszenia</div>
<div class="abs" style="left:741.2px;top:218px"><svg width="3" height="12" viewBox="0 0 3 12" style=""><circle cx="1.5" cy="1.5" r="1.5" fill="#555"/><circle cx="1.5" cy="6" r="1.5" fill="#555"/><circle cx="1.5" cy="10.5" r="1.5" fill="#555"/></svg></div>
<div class="t" style="left:803.5px;top:216.5px;font-size:11px;color:#555">Zgłaszający</div>
<div class="abs" style="left:873.1px;top:218px"><svg width="3" height="12" viewBox="0 0 3 12" style=""><circle cx="1.5" cy="1.5" r="1.5" fill="#555"/><circle cx="1.5" cy="6" r="1.5" fill="#555"/><circle cx="1.5" cy="10.5" r="1.5" fill="#555"/></svg></div>
<div class="t" style="left:938.5px;top:216.5px;font-size:11px;color:#555">Status</div>
<div class="abs" style="left:980.1px;top:218px"><svg width="3" height="12" viewBox="0 0 3 12" style=""><circle cx="1.5" cy="1.5" r="1.5" fill="#555"/><circle cx="1.5" cy="6" r="1.5" fill="#555"/><circle cx="1.5" cy="10.5" r="1.5" fill="#555"/></svg></div>
<div class="t" style="left:1034px;top:216.5px;font-size:11px;color:#555">Kategoria</div>
<div class="abs" style="left:1092.3px;top:218px"><svg width="3" height="12" viewBox="0 0 3 12" style=""><circle cx="1.5" cy="1.5" r="1.5" fill="#555"/><circle cx="1.5" cy="6" r="1.5" fill="#555"/><circle cx="1.5" cy="10.5" r="1.5" fill="#555"/></svg></div>
<div class="t" style="left:1231px;top:216.5px;font-size:11px;color:#555">Czas na odpowiedź</div>
<div class="abs" style="left:1337.3px;top:218px"><svg width="3" height="12" viewBox="0 0 3 12" style=""><circle cx="1.5" cy="1.5" r="1.5" fill="#555"/><circle cx="1.5" cy="6" r="1.5" fill="#555"/><circle cx="1.5" cy="10.5" r="1.5" fill="#555"/></svg></div>
<div class="t" style="left:1366px;top:216.5px;font-size:11px;color:#555">Czas na rozwiąza...</div>
<div class="abs" style="left:1474.0px;top:218px"><svg width="3" height="12" viewBox="0 0 3 12" style=""><circle cx="1.5" cy="1.5" r="1.5" fill="#555"/><circle cx="1.5" cy="6" r="1.5" fill="#555"/><circle cx="1.5" cy="10.5" r="1.5" fill="#555"/></svg></div>
<div class="t" style="left:1501px;top:216.5px;font-size:11px;color:#555">Data utworze...</div>
<div class="abs" style="left:1610.5px;top:218px"><svg width="3" height="12" viewBox="0 0 3 12" style=""><circle cx="1.5" cy="1.5" r="1.5" fill="#555"/><circle cx="1.5" cy="6" r="1.5" fill="#555"/><circle cx="1.5" cy="10.5" r="1.5" fill="#555"/></svg></div>
<div class="t" style="left:1637px;top:216.5px;font-size:11px;color:#555">Data zamknięcia</div>
<div class="abs" style="left:1729.1px;top:218px"><svg width="3" height="12" viewBox="0 0 3 12" style=""><circle cx="1.5" cy="1.5" r="1.5" fill="#555"/><circle cx="1.5" cy="6" r="1.5" fill="#555"/><circle cx="1.5" cy="10.5" r="1.5" fill="#555"/></svg></div>
<div class="abs" style="left:1588px;top:219px"><svg width="7" height="11" viewBox="0 0 7 11" style=""><path d="M3.5,0 V9 M0.5,6 L3.5,9.5 L6.5,6" fill="none" stroke="#4a3fd3" stroke-width="1.5"/></svg></div>
<div class="abs" style="left:1778px;top:211px"><svg width="14" height="18" viewBox="0 0 14 18" style=""><path d="M2,0 H8.5 L14,5.5 V16 Q14,18 12,18 H2 Q0,18 0,16 V2 Q0,0 2,0 Z" fill="#4f9a6d"/><path d="M8.5,0 V5.5 H14" fill="none" stroke="#f8f9fb" stroke-width="1.2"/><path d="M4,8.5 L10,16 M10,8.5 L4,16" stroke="#fff" stroke-width="2"/></svg></div>
<div class="abs" style="left:1799px;top:211px"><svg width="14" height="18" viewBox="0 0 14 18" style=""><path d="M2,0 H8.5 L14,5.5 V16 Q14,18 12,18 H2 Q0,18 0,16 V2 Q0,0 2,0 Z" fill="#6dd2f0"/><path d="M8.5,0 V5.5 H14" fill="none" stroke="#f8f9fb" stroke-width="1.2"/><path d="M4,8.5 L10,16 M10,8.5 L4,16" stroke="#fff" stroke-width="2"/></svg></div>
<div class="abs" style="left:1819px;top:211px"><svg width="14" height="18" viewBox="0 0 14 18" style=""><path d="M2,0 H8.5 L14,5.5 V16 Q14,18 12,18 H2 Q0,18 0,16 V2 Q0,0 2,0 Z" fill="#dc5d69"/><path d="M8.5,0 V5.5 H14" fill="none" stroke="#f8f9fb" stroke-width="1.2"/><g fill="none" stroke="#fff" stroke-width="1.15"><path d="M1.9,14.2 V8.4 H3.5 Q5,8.4 5,10 Q5,11.6 3.5,11.6 H1.9"/><path d="M6.2,8.4 V14.2 H7.2 Q8.9,14.2 8.9,11.3 Q8.9,8.4 7.2,8.4 Z"/><path d="M10.2,14.2 V8.4 H12.6 M10.2,11.2 H12.2"/></g></svg></div>
<div class="abs" style="left:334px;top:244px;width:92.0px;height:28px;border:1px solid #e8e9f8;border-radius:4px;background:#f8f9fc;overflow:hidden"></div>
<div class="abs" style="left:429px;top:244px;width:28px;height:28px;background:#eceefd;border-radius:4px"></div>
<div class="abs" style="left:437px;top:252px"><svg width="12" height="12" viewBox="0 0 12 12" style=""><path d="M0.5,0.5 H11.5 L7,6 V11.5 L5,10 V6 Z" fill="#5b50e0"/></svg></div>
<div class="abs" style="left:469px;top:244px;width:92.0px;height:28px;border:1px solid #e8e9f8;border-radius:4px;background:#f8f9fc;overflow:hidden"></div>
<div class="abs" style="left:564px;top:244px;width:28px;height:28px;background:#eceefd;border-radius:4px"></div>
<div class="abs" style="left:572px;top:252px"><svg width="12" height="12" viewBox="0 0 12 12" style=""><path d="M0.5,0.5 H11.5 L7,6 V11.5 L5,10 V6 Z" fill="#5b50e0"/></svg></div>
<div class="abs" style="left:644px;top:244px;width:116.0px;height:28px;border:1px solid #e8e9f8;border-radius:4px;background:#f8f9fc;overflow:hidden"></div>
<div class="abs" style="left:735.0px;top:245px;width:24px;height:26px;background:#eceefd;border-radius:0 3px 3px 0"></div>
<div class="abs" style="left:743.5px;top:255px;width:0;height:0;border-left:4.5px solid transparent;border-right:4.5px solid transparent;border-top:6px solid #5b50e0"></div>
<div class="abs" style="left:763px;top:244px;width:28px;height:28px;background:#eceefd;border-radius:4px"></div>
<div class="abs" style="left:771px;top:252px"><svg width="12" height="12" viewBox="0 0 12 12" style=""><path d="M0.5,0.5 H11.5 L7,6 V11.5 L5,10 V6 Z" fill="#5b50e0"/></svg></div>
<div class="abs" style="left:803.5px;top:244px;width:91.5px;height:28px;border:1px solid #e8e9f8;border-radius:4px;background:#f8f9fc;overflow:hidden"></div>
<div class="abs" style="left:898px;top:244px;width:28px;height:28px;background:#eceefd;border-radius:4px"></div>
<div class="abs" style="left:906px;top:252px"><svg width="12" height="12" viewBox="0 0 12 12" style=""><path d="M0.5,0.5 H11.5 L7,6 V11.5 L5,10 V6 Z" fill="#5b50e0"/></svg></div>
<div class="abs" style="left:938.5px;top:244px;width:52.0px;height:28px;border:1px solid #e8e9f8;border-radius:4px;background:#f8f9fc;overflow:hidden"></div>
<div class="abs" style="left:965.5px;top:245px;width:24px;height:26px;background:#eceefd;border-radius:0 3px 3px 0"></div>
<div class="abs" style="left:974.0px;top:255px;width:0;height:0;border-left:4.5px solid transparent;border-right:4.5px solid transparent;border-top:6px solid #5b50e0"></div>
<div class="abs" style="left:994px;top:244px;width:28px;height:28px;background:#eceefd;border-radius:4px"></div>
<div class="abs" style="left:1002px;top:252px"><svg width="12" height="12" viewBox="0 0 12 12" style=""><path d="M0.5,0.5 H11.5 L7,6 V11.5 L5,10 V6 Z" fill="#5b50e0"/></svg></div>
<div class="abs" style="left:1034px;top:244px;width:153.5px;height:28px;border:1px solid #e8e9f8;border-radius:4px;background:#f8f9fc;overflow:hidden"></div>
<div class="abs" style="left:1162.5px;top:245px;width:24px;height:26px;background:#eceefd;border-radius:0 3px 3px 0"></div>
<div class="abs" style="left:1171.0px;top:255px;width:0;height:0;border-left:4.5px solid transparent;border-right:4.5px solid transparent;border-top:6px solid #5b50e0"></div>
<div class="abs" style="left:1191px;top:244px;width:28px;height:28px;background:#eceefd;border-radius:4px"></div>
<div class="abs" style="left:1199px;top:252px"><svg width="12" height="12" viewBox="0 0 12 12" style=""><path d="M0.5,0.5 H11.5 L7,6 V11.5 L5,10 V6 Z" fill="#5b50e0"/></svg></div>
<div class="abs" style="left:1501px;top:244px;width:93.0px;height:28px;border:1px solid #e8e9f8;border-radius:4px;background:#f8f9fc;overflow:hidden"></div>
<div class="abs" style="left:1569.0px;top:245px;width:24px;height:26px;background:#eceefd;border-radius:0 3px 3px 0"></div>
<div class="abs" style="left:1575.0px;top:251px"><svg width="13" height="14" viewBox="0 0 13 14" style=""><rect x="0.7" y="2" width="11.6" height="11" fill="none" stroke="#6a62e2" stroke-width="1.3"/><path d="M0.7,4.8 H12.3 M3.5,0 V3 M9.5,0 V3" stroke="#6a62e2" stroke-width="1.3"/><rect x="7" y="8" width="4" height="3.6" fill="#4a3fd3"/></svg></div>
<div class="abs" style="left:1597px;top:244px;width:28px;height:28px;background:#eceefd;border-radius:4px"></div>
<div class="abs" style="left:1605px;top:252px"><svg width="12" height="12" viewBox="0 0 12 12" style=""><path d="M0.5,0.5 H11.5 L7,6 V11.5 L5,10 V6 Z" fill="#5b50e0"/></svg></div>
<div class="abs" style="left:1637px;top:244px;width:94.0px;height:28px;border:1px solid #e8e9f8;border-radius:4px;background:#f8f9fc;overflow:hidden"></div>
<div class="abs" style="left:1706.0px;top:245px;width:24px;height:26px;background:#eceefd;border-radius:0 3px 3px 0"></div>
<div class="abs" style="left:1712.0px;top:251px"><svg width="13" height="14" viewBox="0 0 13 14" style=""><rect x="0.7" y="2" width="11.6" height="11" fill="none" stroke="#6a62e2" stroke-width="1.3"/><path d="M0.7,4.8 H12.3 M3.5,0 V3 M9.5,0 V3" stroke="#6a62e2" stroke-width="1.3"/><rect x="7" y="8" width="4" height="3.6" fill="#4a3fd3"/></svg></div>
<div class="abs" style="left:1734px;top:244px;width:28px;height:28px;background:#eceefd;border-radius:4px"></div>
<div class="abs" style="left:1742px;top:252px"><svg width="12" height="12" viewBox="0 0 12 12" style=""><path d="M0.5,0.5 H11.5 L7,6 V11.5 L5,10 V6 Z" fill="#5b50e0"/></svg></div>
<div class="abs" style="left:288px;top:277px;width:1603px;height:571px;overflow:hidden">
<div class="abs" style="left:0;top:0px;width:1579px;height:39px;background:#d0e3ee"></div>
<div class="abs" style="left:1207px;top:0px;width:136px;height:39px;background:#c9dde9"></div>
<div class="abs" style="left:0;top:38px;width:1579px;height:1px;background:#e6ecee"></div>
<div class="abs" style="left:6px;top:13.0px;width:12px;height:12px;border:1.5px solid #6f67ee;border-radius:3px;background:#fff"></div>
<div class="cell" style="left:46.0px;top:11.5px;color:#4b3fd6">Incydent</div>
<div class="cell" style="left:181.0px;top:11.5px;color:#4b3fd6">Incident/212/2025/3/7</div>
<div class="abs" style="left:356px;top:11.0px"><svg width="18" height="14" viewBox="0 0 18 14" style=""><rect x="0.5" y="0.5" width="17" height="11" rx="0.8" fill="#aaa6ec"/><rect x="2" y="1.8" width="14" height="8" fill="#3b35d1"/><rect x="3" y="12.3" width="12" height="1.7" rx="0.8" fill="#aaa6ec"/></svg></div>
<div class="cell" style="left:380.6px;top:11.5px;color:#4b3fd6">Portal</div>
<div class="cell" style="left:515.5px;top:11.5px;color:#4b3fd6">Admin Admin</div>
<div class="abs" style="left:650px;top:8.5px;width:84px;height:22px;background:#2a8a7a;clip-path:polygon(5px 0,79px 0,84px 11px,79px 22px,5px 22px,0 11px);color:#fff;font-weight:bold;font-size:11.3px;text-align:center;line-height:22px">Nowe</div>
<div class="cell" style="left:746.0px;top:11.5px;color:#4b3fd6">Awaria drukarki</div>
<div class="abs" style="left:943px;top:10.0px;width:123px;height:22px;background:#e7eaee;clip-path:polygon(5px 0,118px 0,123px 11px,118px 22px,5px 22px,0 11px)"></div>
<div class="abs" style="left:943px;top:10.0px;width:11px;height:22px;background:#3a9ad9;clip-path:polygon(5px 0,11px 0,11px 22px,5px 22px,0 11px)"></div>
<div class="abs" style="left:947px;top:12.0px;width:50px;height:18px;background:linear-gradient(90deg,#5048d8,#3d3795);border-radius:5px;color:#fff;font-weight:bold;font-size:11px;line-height:18px;text-align:center;letter-spacing:-0.4px">3g 37min</div>
<div class="cell" style="left:1213px;top:11.5px;color:#4b3fd6;letter-spacing:-0.15px">07.03.2025 13:45:10</div>
<div class="abs" style="left:1487px;top:8.0px;width:26px;height:23px;background:#e2e4fb;clip-path:polygon(25% 0,75% 0,100% 50%,75% 100%,25% 100%,0 50%)"></div>
<div class="abs" style="left:1493px;top:14.0px"><svg width="14" height="11" viewBox="0 0 14 11" style=""><path d="M0.3,5.5 Q7,-3 13.7,5.5 Q7,14 0.3,5.5 Z" fill="#a6a1ee"/><circle cx="7" cy="5.5" r="3.2" fill="#eef0fd"/><circle cx="7" cy="5.5" r="2.4" fill="#3b35d1"/><circle cx="6" cy="4.6" r="0.9" fill="#eef0fd"/></svg></div>
<div class="abs" style="left:1516px;top:8.0px;width:26px;height:23px;background:#e2e4fb;clip-path:polygon(25% 0,75% 0,100% 50%,75% 100%,25% 100%,0 50%)"></div>
<div class="abs" style="left:1523px;top:13.5px"><svg width="14" height="13" viewBox="0 0 14 13" style=""><path d="M6,1.8 H2.2 Q0.8,1.8 0.8,3.2 V10.8 Q0.8,12.2 2.2,12.2 H9.8 Q11.2,12.2 11.2,10.8 V7" fill="none" stroke="#3b35d1" stroke-width="1.3"/><path d="M5,8.3 L5.3,6.2 L10.6,1 Q11.3,0.4 12,1 L12.4,1.4 Q13,2.1 12.4,2.8 L7.1,8 Z" fill="none" stroke="#3b35d1" stroke-width="1.2"/></svg></div>
<div class="abs" style="left:1546px;top:8.0px;width:26px;height:23px;background:#e2e4fb;clip-path:polygon(25% 0,75% 0,100% 50%,75% 100%,25% 100%,0 50%)"></div>
<div class="abs" style="left:1553.5px;top:13.0px"><svg width="11" height="13" viewBox="0 0 11 13" style=""><path d="M0.5,2.8 H10.5 M3.5,2.5 Q3.5,0.6 5.5,0.6 Q7.5,0.6 7.5,2.5" fill="none" stroke="#5a52d8" stroke-width="1.3"/><path d="M1.6,3.2 H9.4 V11.2 Q9.4,12.4 8.2,12.4 H2.8 Q1.6,12.4 1.6,11.2 Z" fill="none" stroke="#3b35d1" stroke-width="1.3"/><path d="M4,5 V10.5 M5.5,5 V10.5 M7,5 V10.5" stroke="#7a6fe0" stroke-width="0.8"/></svg></div>
<div class="abs" style="left:0;top:39px;width:1579px;height:36px;background:#d0e3ee"></div>
<div class="abs" style="left:1207px;top:39px;width:136px;height:36px;background:#c9dde9"></div>
<div class="abs" style="left:0;top:74px;width:1579px;height:1px;background:#e6ecee"></div>
<div class="abs" style="left:6px;top:50.5px;width:12px;height:12px;border:1.5px solid #6f67ee;border-radius:3px;background:#fff"></div>
<div class="cell" style="left:46.0px;top:49.0px;color:#2e2e30">Usługa</div>
<div class="cell" style="left:181.0px;top:49.0px;color:#2e2e30">2025/37</div>
<div class="abs" style="left:356px;top:48.5px"><svg width="18" height="14" viewBox="0 0 18 14" style=""><rect x="0.5" y="0.5" width="17" height="11" rx="0.8" fill="#aaa6ec"/><rect x="2" y="1.8" width="14" height="8" fill="#3b35d1"/><rect x="3" y="12.3" width="12" height="1.7" rx="0.8" fill="#aaa6ec"/></svg></div>
<div class="cell" style="left:380.6px;top:49.0px;color:#2e2e30">Portal</div>
<div class="cell" style="left:515.5px;top:49.0px;color:#2e2e30">Admin Admin</div>
<div class="cell" style="left:650.5px;top:49.0px;color:#2e2e30">-</div>
<div class="cell" style="left:746.0px;top:49.0px;color:#2e2e30">Pakiet MS Office</div>
<div class="cell" style="left:1213px;top:49.0px;color:#2e2e30;letter-spacing:-0.15px">07.03.2025 09:53:24</div>
<div class="abs" style="left:0;top:75px;width:1579px;height:36px;background:#d0e3ee"></div>
<div class="abs" style="left:1207px;top:75px;width:136px;height:36px;background:#c9dde9"></div>
<div class="abs" style="left:0;top:110px;width:1579px;height:1px;background:#e6ecee"></div>
<div class="abs" style="left:6px;top:86.5px;width:12px;height:12px;border:1.5px solid #6f67ee;border-radius:3px;background:#fff"></div>
<div class="cell" style="left:46.0px;top:85.0px;color:#2e2e30">Usługa</div>
<div class="cell" style="left:181.0px;top:85.0px;color:#2e2e30">2025/36</div>
<div class="abs" style="left:356px;top:84.5px"><svg width="18" height="14" viewBox="0 0 18 14" style=""><rect x="0.5" y="0.5" width="17" height="11" rx="0.8" fill="#aaa6ec"/><rect x="2" y="1.8" width="14" height="8" fill="#3b35d1"/><rect x="3" y="12.3" width="12" height="1.7" rx="0.8" fill="#aaa6ec"/></svg></div>
<div class="cell" style="left:380.6px;top:85.0px;color:#2e2e30">Portal</div>
<div class="cell" style="left:650.5px;top:85.0px;color:#2e2e30">-</div>
<div class="cell" style="left:746.0px;top:85.0px;color:#2e2e30">Pakiet MS Office</div>
<div class="cell" style="left:1213px;top:85.0px;color:#2e2e30;letter-spacing:-0.15px">07.03.2025 09:42:14</div>
<div class="abs" style="left:0;top:111px;width:1579px;height:36px;background:#d0e3ee"></div>
<div class="abs" style="left:1207px;top:111px;width:136px;height:36px;background:#c9dde9"></div>
<div class="abs" style="left:0;top:146px;width:1579px;height:1px;background:#e6ecee"></div>
<div class="abs" style="left:6px;top:122.5px;width:12px;height:12px;border:1.5px solid #6f67ee;border-radius:3px;background:#fff"></div>
<div class="cell" style="left:46.0px;top:121.0px;color:#2e2e30">Usługa</div>
<div class="cell" style="left:181.0px;top:121.0px;color:#2e2e30">2025/35</div>
<div class="abs" style="left:356px;top:120.5px"><svg width="18" height="14" viewBox="0 0 18 14" style=""><rect x="0.5" y="0.5" width="17" height="11" rx="0.8" fill="#aaa6ec"/><rect x="2" y="1.8" width="14" height="8" fill="#3b35d1"/><rect x="3" y="12.3" width="12" height="1.7" rx="0.8" fill="#aaa6ec"/></svg></div>
<div class="cell" style="left:380.6px;top:121.0px;color:#2e2e30">Portal</div>
<div class="cell" style="left:515.5px;top:121.0px;color:#2e2e30">Admin Admin</div>
<div class="cell" style="left:650.5px;top:121.0px;color:#2e2e30">-</div>
<div class="cell" style="left:746.0px;top:121.0px;color:#2e2e30">Nadanie uprawnień/dostępu</div>
<div class="cell" style="left:1213px;top:121.0px;color:#2e2e30;letter-spacing:-0.15px">07.03.2025 09:25:18</div>
<div class="abs" style="left:0;top:147px;width:1579px;height:36px;background:#d0e3ee"></div>
<div class="abs" style="left:1207px;top:147px;width:136px;height:36px;background:#c9dde9"></div>
<div class="abs" style="left:0;top:182px;width:1579px;height:1px;background:#e6ecee"></div>
<div class="abs" style="left:6px;top:158.5px;width:12px;height:12px;border:1.5px solid #6f67ee;border-radius:3px;background:#fff"></div>
<div class="cell" style="left:46.0px;top:157.0px;color:#2e2e30">Zadanie</div>
<div class="cell" style="left:181.0px;top:157.0px;color:#2e2e30">2025/7</div>
<div class="abs" style="left:356px;top:156.5px"><svg width="18" height="14" viewBox="0 0 18 14" style=""><rect x="0.5" y="0.5" width="17" height="11" rx="0.8" fill="#aaa6ec"/><rect x="2" y="1.8" width="14" height="8" fill="#3b35d1"/><rect x="3" y="12.3" width="12" height="1.7" rx="0.8" fill="#aaa6ec"/></svg></div>
<div class="cell" style="left:380.6px;top:157.0px;color:#2e2e30">Portal</div>
<div class="cell" style="left:515.5px;top:157.0px;color:#2e2e30">Admin Admin</div>
<div class="cell" style="left:650.5px;top:157.0px;color:#2e2e30">-</div>
<div class="cell" style="left:746.0px;top:157.0px;color:#2e2e30">Zadanie</div>
<div class="cell" style="left:1213px;top:157.0px;color:#2e2e30;letter-spacing:-0.15px">07.03.2025 09:23:53</div>
<div class="abs" style="left:0;top:183px;width:1579px;height:36px;background:#d0e3ee"></div>
<div class="abs" style="left:1207px;top:183px;width:136px;height:36px;background:#c9dde9"></div>
<div class="abs" style="left:0;top:218px;width:1579px;height:1px;background:#e6ecee"></div>
<div class="abs" style="left:6px;top:194.5px;width:12px;height:12px;border:1.5px solid #6f67ee;border-radius:3px;background:#fff"></div>
<div class="cell" style="left:46.0px;top:193.0px;color:#2e2e30">Usługa</div>
<div class="cell" style="left:181.0px;top:193.0px;color:#2e2e30">2025/34</div>
<div class="abs" style="left:356px;top:192.5px"><svg width="18" height="14" viewBox="0 0 18 14" style=""><rect x="0.5" y="0.5" width="17" height="11" rx="0.8" fill="#aaa6ec"/><rect x="2" y="1.8" width="14" height="8" fill="#3b35d1"/><rect x="3" y="12.3" width="12" height="1.7" rx="0.8" fill="#aaa6ec"/></svg></div>
<div class="cell" style="left:380.6px;top:193.0px;color:#2e2e30">Portal</div>
<div class="cell" style="left:650.5px;top:193.0px;color:#2e2e30">-</div>
<div class="cell" style="left:746.0px;top:193.0px;color:#2e2e30">Pakiet MS Office</div>
<div class="cell" style="left:1213px;top:193.0px;color:#2e2e30;letter-spacing:-0.15px">07.03.2025 09:20:30</div>
<div class="abs" style="left:0;top:219px;width:1579px;height:36px;background:#d0e3ee"></div>
<div class="abs" style="left:1207px;top:219px;width:136px;height:36px;background:#c9dde9"></div>
<div class="abs" style="left:0;top:254px;width:1579px;height:1px;background:#e6ecee"></div>
<div class="abs" style="left:6px;top:230.5px;width:12px;height:12px;border:1.5px solid #6f67ee;border-radius:3px;background:#fff"></div>
<div class="cell" style="left:46.0px;top:229.0px;color:#2e2e30">Zadanie</div>
<div class="cell" style="left:181.0px;top:229.0px;color:#2e2e30">2025/6</div>
<div class="abs" style="left:356px;top:228.5px"><svg width="18" height="14" viewBox="0 0 18 14" style=""><rect x="0.5" y="0.5" width="17" height="11" rx="0.8" fill="#aaa6ec"/><rect x="2" y="1.8" width="14" height="8" fill="#3b35d1"/><rect x="3" y="12.3" width="12" height="1.7" rx="0.8" fill="#aaa6ec"/></svg></div>
<div class="cell" style="left:380.6px;top:229.0px;color:#2e2e30">Portal</div>
<div class="cell" style="left:515.5px;top:229.0px;color:#2e2e30">Admin Admin</div>
<div class="cell" style="left:650.5px;top:229.0px;color:#2e2e30">-</div>
<div class="cell" style="left:746.0px;top:229.0px;color:#2e2e30">Zadanie</div>
<div class="cell" style="left:1213px;top:229.0px;color:#2e2e30;letter-spacing:-0.15px">07.03.2025 09:19:53</div>
<div class="abs" style="left:0;top:255px;width:1579px;height:36px;background:#d0e3ee"></div>
<div class="abs" style="left:1207px;top:255px;width:136px;height:36px;background:#c9dde9"></div>
<div class="abs" style="left:0;top:290px;width:1579px;height:1px;background:#e6ecee"></div>
<div class="abs" style="left:6px;top:266.5px;width:12px;height:12px;border:1.5px solid #6f67ee;border-radius:3px;background:#fff"></div>
<div class="cell" style="left:46.0px;top:265.0px;color:#2e2e30">Zadanie</div>
<div class="cell" style="left:181.0px;top:265.0px;color:#2e2e30">2025/5</div>
<div class="abs" style="left:356px;top:264.5px"><svg width="18" height="14" viewBox="0 0 18 14" style=""><rect x="0.5" y="0.5" width="17" height="11" rx="0.8" fill="#aaa6ec"/><rect x="2" y="1.8" width="14" height="8" fill="#3b35d1"/><rect x="3" y="12.3" width="12" height="1.7" rx="0.8" fill="#aaa6ec"/></svg></div>
<div class="cell" style="left:380.6px;top:265.0px;color:#2e2e30">Portal</div>
<div class="cell" style="left:515.5px;top:265.0px;color:#2e2e30">Admin Admin</div>
<div class="cell" style="left:650.5px;top:265.0px;color:#2e2e30">-</div>
<div class="cell" style="left:746.0px;top:265.0px;color:#2e2e30">Zadanie</div>
<div class="cell" style="left:1213px;top:265.0px;color:#2e2e30;letter-spacing:-0.15px">07.03.2025 09:19:39</div>
<div class="abs" style="left:0;top:291px;width:1579px;height:37px;background:#f8f8fa"></div>
<div class="abs" style="left:1207px;top:291px;width:136px;height:37px;background:#f2f3f5"></div>
<div class="abs" style="left:0;top:327px;width:1579px;height:1px;background:#e4e9ee"></div>
<div class="abs" style="left:6px;top:303.0px;width:12px;height:12px;border:1.5px solid #6f67ee;border-radius:3px;background:#fff"></div>
<div class="cell" style="left:46.0px;top:301.5px;color:#2e2e30">Incydent</div>
<div class="cell" style="left:181.0px;top:301.5px;color:#2e2e30">Incident/211/2025/3/6</div>
<div class="abs" style="left:315px;top:301.0px"><svg width="13" height="14" viewBox="0 0 13 14" style=""><circle cx="6.5" cy="3.5" r="3.2" fill="#d63a4a"/><path d="M0,14 Q0,8.5 4.5,8 L6.5,9.5 L8.5,8 Q13,8.5 13,14 Z" fill="#d63a4a"/><path d="M6,9.5 H7 L7.3,13 H5.7 Z" fill="#f5c8cc"/></svg></div>
<div class="abs" style="left:356px;top:301.0px"><svg width="18" height="14" viewBox="0 0 18 14" style=""><rect x="0.5" y="0.5" width="17" height="11" rx="0.8" fill="#aaa6ec"/><rect x="2" y="1.8" width="14" height="8" fill="#3b35d1"/><rect x="3" y="12.3" width="12" height="1.7" rx="0.8" fill="#aaa6ec"/></svg></div>
<div class="cell" style="left:380.6px;top:301.5px;color:#2e2e30">Portal</div>
<div class="cell" style="left:515.5px;top:301.5px;color:#2e2e30">Admin Admin</div>
<div class="abs" style="left:650px;top:298.5px;width:84px;height:22px;background:#c7d6c8;clip-path:polygon(5px 0,79px 0,84px 11px,79px 22px,5px 22px,0 11px);color:#2d3a30;font-weight:bold;font-size:11px;text-align:center;line-height:22px">Zamknięte</div>
<div class="cell" style="left:746.0px;top:301.5px;color:#2e2e30">Zgłoszenie anonimowe</div>
<div class="cell" style="left:1213px;top:301.5px;color:#2e2e30;letter-spacing:-0.15px">06.03.2025 12:22:18</div>
<div class="cell" style="left:1349px;top:301.5px;color:#2e2e30;letter-spacing:-0.15px">06.03.2025 12:59:51</div>
<div class="abs" style="left:0;top:328px;width:1579px;height:36px;background:#d0e3ee"></div>
<div class="abs" style="left:1207px;top:328px;width:136px;height:36px;background:#c9dde9"></div>
<div class="abs" style="left:0;top:363px;width:1579px;height:1px;background:#e6ecee"></div>
<div class="abs" style="left:6px;top:339.5px;width:12px;height:12px;border:1.5px solid #6f67ee;border-radius:3px;background:#fff"></div>
<div class="cell" style="left:46.0px;top:338.0px;color:#2e2e30">Incydent</div>
<div class="cell" style="left:181.0px;top:338.0px;color:#2e2e30">Incident/210/2025/3/6</div>
<div class="abs" style="left:356px;top:337.5px"><svg width="18" height="14" viewBox="0 0 18 14" style=""><rect x="0.5" y="0.5" width="17" height="11" rx="0.8" fill="#aaa6ec"/><rect x="2" y="1.8" width="14" height="8" fill="#3b35d1"/><rect x="3" y="12.3" width="12" height="1.7" rx="0.8" fill="#aaa6ec"/></svg></div>
<div class="cell" style="left:380.6px;top:338.0px;color:#2e2e30">Portal</div>
<div class="cell" style="left:515.5px;top:338.0px;color:#2e2e30">Admin Admin</div>
<div class="abs" style="left:650px;top:335.0px;width:84px;height:22px;background:#2a8a7a;clip-path:polygon(5px 0,79px 0,84px 11px,79px 22px,5px 22px,0 11px);color:#fff;font-weight:bold;font-size:11.3px;text-align:center;line-height:22px">Nowe</div>
<div class="cell" style="left:746.0px;top:338.0px;color:#2e2e30">Zgłoszenie anonimowe</div>
<div class="cell" style="left:1213px;top:338.0px;color:#2e2e30;letter-spacing:-0.15px">06.03.2025 12:11:54</div>
<div class="abs" style="left:0;top:364px;width:1579px;height:36px;background:#d0e3ee"></div>
<div class="abs" style="left:1207px;top:364px;width:136px;height:36px;background:#c9dde9"></div>
<div class="abs" style="left:0;top:399px;width:1579px;height:1px;background:#e6ecee"></div>
<div class="abs" style="left:6px;top:375.5px;width:12px;height:12px;border:1.5px solid #6f67ee;border-radius:3px;background:#fff"></div>
<div class="cell" style="left:46.0px;top:374.0px;color:#2e2e30">Incydent</div>
<div class="cell" style="left:181.0px;top:374.0px;color:#2e2e30">Incident/209/2025/3/6</div>
<div class="abs" style="left:356px;top:373.5px"><svg width="18" height="14" viewBox="0 0 18 14" style=""><rect x="0.5" y="0.5" width="17" height="11" rx="0.8" fill="#aaa6ec"/><rect x="2" y="1.8" width="14" height="8" fill="#3b35d1"/><rect x="3" y="12.3" width="12" height="1.7" rx="0.8" fill="#aaa6ec"/></svg></div>
<div class="cell" style="left:380.6px;top:374.0px;color:#2e2e30">Portal</div>
<div class="cell" style="left:515.5px;top:374.0px;color:#2e2e30">Admin Admin</div>
<div class="abs" style="left:650px;top:371.0px;width:84px;height:22px;background:#2a8a7a;clip-path:polygon(5px 0,79px 0,84px 11px,79px 22px,5px 22px,0 11px);color:#fff;font-weight:bold;font-size:11.3px;text-align:center;line-height:22px">Nowe</div>
<div class="cell" style="left:746.0px;top:374.0px;color:#2e2e30">Zgłoszenie anonimowe</div>
<div class="cell" style="left:1213px;top:374.0px;color:#2e2e30;letter-spacing:-0.15px">06.03.2025 12:08:16</div>
<div class="abs" style="left:0;top:400px;width:1579px;height:36px;background:#d0e3ee"></div>
<div class="abs" style="left:1207px;top:400px;width:136px;height:36px;background:#c9dde9"></div>
<div class="abs" style="left:0;top:435px;width:1579px;height:1px;background:#e6ecee"></div>
<div class="abs" style="left:6px;top:411.5px;width:12px;height:12px;border:1.5px solid #6f67ee;border-radius:3px;background:#fff"></div>
<div class="cell" style="left:46.0px;top:410.0px;color:#2e2e30">Incydent</div>
<div class="cell" style="left:181.0px;top:410.0px;color:#2e2e30">Incident/208/2025/3/6</div>
<div class="abs" style="left:356px;top:409.5px"><svg width="18" height="14" viewBox="0 0 18 14" style=""><rect x="0.5" y="0.5" width="17" height="11" rx="0.8" fill="#aaa6ec"/><rect x="2" y="1.8" width="14" height="8" fill="#3b35d1"/><rect x="3" y="12.3" width="12" height="1.7" rx="0.8" fill="#aaa6ec"/></svg></div>
<div class="cell" style="left:380.6px;top:410.0px;color:#2e2e30">Portal</div>
<div class="cell" style="left:515.5px;top:410.0px;color:#2e2e30">Admin Admin</div>
<div class="abs" style="left:650px;top:407.0px;width:84px;height:22px;background:#2a8a7a;clip-path:polygon(5px 0,79px 0,84px 11px,79px 22px,5px 22px,0 11px);color:#fff;font-weight:bold;font-size:11.3px;text-align:center;line-height:22px">Nowe</div>
<div class="cell" style="left:746.0px;top:410.0px;color:#2e2e30">Zgłoszenie anonimowe</div>
<div class="cell" style="left:1213px;top:410.0px;color:#2e2e30;letter-spacing:-0.15px">06.03.2025 12:06:40</div>
<div class="abs" style="left:0;top:436px;width:1579px;height:36px;background:#d0e3ee"></div>
<div class="abs" style="left:1207px;top:436px;width:136px;height:36px;background:#c9dde9"></div>
<div class="abs" style="left:0;top:471px;width:1579px;height:1px;background:#e6ecee"></div>
<div class="abs" style="left:6px;top:447.5px;width:12px;height:12px;border:1.5px solid #6f67ee;border-radius:3px;background:#fff"></div>
<div class="cell" style="left:46.0px;top:446.0px;color:#2e2e30">Incydent</div>
<div class="cell" style="left:181.0px;top:446.0px;color:#2e2e30">Incident/207/2025/3/6</div>
<div class="abs" style="left:356px;top:445.5px"><svg width="18" height="14" viewBox="0 0 18 14" style=""><rect x="0.5" y="0.5" width="17" height="11" rx="0.8" fill="#aaa6ec"/><rect x="2" y="1.8" width="14" height="8" fill="#3b35d1"/><rect x="3" y="12.3" width="12" height="1.7" rx="0.8" fill="#aaa6ec"/></svg></div>
<div class="cell" style="left:380.6px;top:446.0px;color:#2e2e30">Portal</div>
<div class="cell" style="left:515.5px;top:446.0px;color:#2e2e30">Admin Admin</div>
<div class="abs" style="left:650px;top:443.0px;width:84px;height:22px;background:#2a8a7a;clip-path:polygon(5px 0,79px 0,84px 11px,79px 22px,5px 22px,0 11px);color:#fff;font-weight:bold;font-size:11.3px;text-align:center;line-height:22px">Nowe</div>
<div class="cell" style="left:746.0px;top:446.0px;color:#2e2e30">Zgłoszenie anonimowe</div>
<div class="cell" style="left:1213px;top:446.0px;color:#2e2e30;letter-spacing:-0.15px">06.03.2025 11:55:26</div>
<div class="abs" style="left:0;top:472px;width:1579px;height:36px;background:#d0e3ee"></div>
<div class="abs" style="left:1207px;top:472px;width:136px;height:36px;background:#c9dde9"></div>
<div class="abs" style="left:0;top:507px;width:1579px;height:1px;background:#e6ecee"></div>
<div class="abs" style="left:6px;top:483.5px;width:12px;height:12px;border:1.5px solid #6f67ee;border-radius:3px;background:#fff"></div>
<div class="cell" style="left:46.0px;top:482.0px;color:#2e2e30">Incydent</div>
<div class="cell" style="left:181.0px;top:482.0px;color:#2e2e30">Incident/206/2025/3/6</div>
<div class="abs" style="left:356px;top:481.5px"><svg width="18" height="14" viewBox="0 0 18 14" style=""><rect x="0.5" y="0.5" width="17" height="11" rx="0.8" fill="#aaa6ec"/><rect x="2" y="1.8" width="14" height="8" fill="#3b35d1"/><rect x="3" y="12.3" width="12" height="1.7" rx="0.8" fill="#aaa6ec"/></svg></div>
<div class="cell" style="left:380.6px;top:482.0px;color:#2e2e30">Portal</div>
<div class="cell" style="left:515.5px;top:482.0px;color:#2e2e30">Admin Admin</div>
<div class="abs" style="left:650px;top:479.0px;width:84px;height:22px;background:#2a8a7a;clip-path:polygon(5px 0,79px 0,84px 11px,79px 22px,5px 22px,0 11px);color:#fff;font-weight:bold;font-size:11.3px;text-align:center;line-height:22px">Nowe</div>
<div class="cell" style="left:746.0px;top:482.0px;color:#2e2e30">Zgłoszenie anonimowe</div>
<div class="cell" style="left:1213px;top:482.0px;color:#2e2e30;letter-spacing:-0.15px">06.03.2025 11:52:52</div>
<div class="abs" style="left:0;top:508px;width:1579px;height:36px;background:#d0e3ee"></div>
<div class="abs" style="left:1207px;top:508px;width:136px;height:36px;background:#c9dde9"></div>
<div class="abs" style="left:0;top:543px;width:1579px;height:1px;background:#e6ecee"></div>
<div class="abs" style="left:6px;top:519.5px;width:12px;height:12px;border:1.5px solid #6f67ee;border-radius:3px;background:#fff"></div>
<div class="cell" style="left:46.0px;top:518.0px;color:#2e2e30">Incydent</div>
<div class="cell" style="left:181.0px;top:518.0px;color:#2e2e30">Incident/205/2025/3/6</div>
<div class="abs" style="left:356px;top:517.5px"><svg width="18" height="14" viewBox="0 0 18 14" style=""><rect x="0.5" y="0.5" width="17" height="11" rx="0.8" fill="#aaa6ec"/><rect x="2" y="1.8" width="14" height="8" fill="#3b35d1"/><rect x="3" y="12.3" width="12" height="1.7" rx="0.8" fill="#aaa6ec"/></svg></div>
<div class="cell" style="left:380.6px;top:518.0px;color:#2e2e30">Portal</div>
<div class="cell" style="left:515.5px;top:518.0px;color:#2e2e30">Admin Admin</div>
<div class="abs" style="left:650px;top:515.0px;width:84px;height:22px;background:#2a8a7a;clip-path:polygon(5px 0,79px 0,84px 11px,79px 22px,5px 22px,0 11px);color:#fff;font-weight:bold;font-size:11.3px;text-align:center;line-height:22px">Nowe</div>
<div class="cell" style="left:746.0px;top:518.0px;color:#2e2e30">Zgłoszenie anonimowe</div>
<div class="cell" style="left:1213px;top:518.0px;color:#2e2e30;letter-spacing:-0.15px">06.03.2025 11:51:59</div>
<div class="abs" style="left:0;top:544px;width:1579px;height:36px;background:#d0e3ee"></div>
<div class="abs" style="left:1207px;top:544px;width:136px;height:36px;background:#c9dde9"></div>
<div class="abs" style="left:0;top:579px;width:1579px;height:1px;background:#e6ecee"></div>
<div class="abs" style="left:6px;top:555.5px;width:12px;height:12px;border:1.5px solid #6f67ee;border-radius:3px;background:#fff"></div>
<div class="cell" style="left:46.0px;top:554.0px;color:#2e2e30">Usługa</div>
<div class="cell" style="left:181.0px;top:554.0px;color:#2e2e30">2025/33</div>
<div class="abs" style="left:356px;top:553.5px"><svg width="18" height="14" viewBox="0 0 18 14" style=""><rect x="0.5" y="0.5" width="17" height="11" rx="0.8" fill="#aaa6ec"/><rect x="2" y="1.8" width="14" height="8" fill="#3b35d1"/><rect x="3" y="12.3" width="12" height="1.7" rx="0.8" fill="#aaa6ec"/></svg></div>
<div class="cell" style="left:380.6px;top:554.0px;color:#2e2e30">Portal</div>
<div class="cell" style="left:515.5px;top:554.0px;color:#2e2e30">Admin Admin</div>
<div class="cell" style="left:650.5px;top:554.0px;color:#2e2e30">-</div>
<div class="cell" style="left:746.0px;top:554.0px;color:#2e2e30">Program pocztowy</div>
<div class="cell" style="left:1213px;top:554.0px;color:#2e2e30;letter-spacing:-0.15px">06.03.2025 09:13:20</div>
</div>
<div class="abs" style="left:1891px;top:277px;width:10px;height:571px;background:#e7eafa"></div>
<div class="abs" style="left:1893px;top:290px;width:6px;height:189px;background:#b9bccb;border-radius:3px"></div>
<div class="abs" style="left:1893px;top:281px;width:0;height:0;border-left:3.5px solid transparent;border-right:3.5px solid transparent;border-bottom:4px solid #b9bccb"></div>
<div class="abs" style="left:1893px;top:840px;width:0;height:0;border-left:3.5px solid transparent;border-right:3.5px solid transparent;border-top:4px solid #b9bccb"></div>
<div class="abs" style="left:288px;top:848px;width:1612px;height:1px;background:#eceef2"></div>
<div class="abs" style="left:304px;top:863px"><svg width="8" height="9" viewBox="0 0 8 9" style=""><path d="M0.7,0 V9" stroke="#666" stroke-width="1.4"/><path d="M7.5,0.5 V8.5 L2,4.5 Z" fill="#666"/></svg></div>
<div class="abs" style="left:333px;top:863px"><svg width="7" height="9" viewBox="0 0 7 9" style=""><path d="M6,0.5 V8.5 L0.5,4.5 Z" fill="#666"/></svg></div>
<div class="abs" style="left:350px;top:854px;width:28px;height:28px;background:#d3d3f2;color:#4a3fd3;font-size:12px;text-align:center;line-height:28px">1</div>
<div class="abs" style="left:388px;top:863px"><svg width="7" height="9" viewBox="0 0 7 9" style=""><path d="M0.5,0.5 V8.5 L6,4.5 Z" fill="#666"/></svg></div>
<div class="abs" style="left:415px;top:863px"><svg width="8" height="9" viewBox="0 0 8 9" style=""><path d="M7.3,0 V9" stroke="#666" stroke-width="1.4"/><path d="M0.5,0.5 V8.5 L6,4.5 Z" fill="#666"/></svg></div>
<div class="t" style="left:445.5px;top:860px;color:#333">Strona</div>
<div class="abs" style="left:486px;top:854px;width:59px;height:28px;border:1px solid #e6e8f7;border-radius:4px;background:#f8f9fc"></div>
<div class="t" style="left:497px;top:860px;color:#333">1</div>
<div class="t" style="left:551px;top:860px;color:#333">z 1</div>
<div class="abs" style="left:578.5px;top:854px;width:69.5px;height:28px;border:1px solid #e6e8f7;border-radius:4px;background:#f8f9fc;overflow:hidden"><div class="abs" style="left:44px;top:0;width:25px;height:28px;background:#eceefd"></div></div>
<div class="t" style="left:588px;top:860px;color:#333">100</div>
<div class="abs" style="left:631px;top:865px;width:0;height:0;border-left:4.5px solid transparent;border-right:4.5px solid transparent;border-top:6px solid #3b35d1"></div>
<div class="t" style="left:654.4px;top:860px;color:#333">na stronę</div>
<div class="t" style="left:1669.5px;top:860px;color:#333">Wyświetlanie elementów 1 - 45 z 45</div>
<div class="abs" style="left:1876px;top:861.5px"><svg width="13" height="14" viewBox="0 0 13 14" style=""><path d="M10.3,5.2 A5.2,5.2 0 1 1 6.5,2.6" fill="none" stroke="#222" stroke-width="1.7"/><path d="M6.2,0 L10,2.6 L6.2,5.2 Z" fill="#222"/></svg></div>
<div class="abs" style="left:1678px;top:305px"><svg width="112" height="100" viewBox="0 0 112 100" style=""><defs><filter id="sh" x="-20%" y="-20%" width="140%" height="140%"><feDropShadow dx="2" dy="3" stdDeviation="2.8" flood-color="#1a2a40" flood-opacity="0.38"/></filter></defs><path transform="translate(2,4)" d="M0.6,78.4 L75.4,10.2 L70.6,7 L98.1,-0.2 L85.3,25.7 L83.5,20.2 Z" fill="#92d13f" filter="url(#sh)"/></svg></div>
</body></html>
